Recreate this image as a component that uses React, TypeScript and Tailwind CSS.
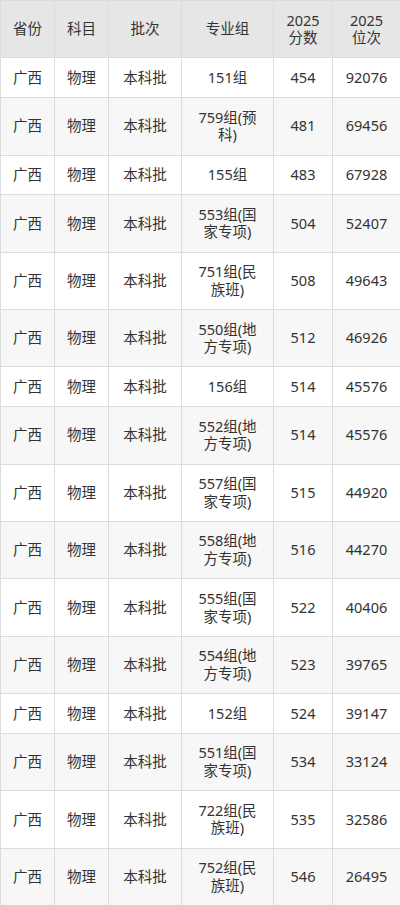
import React from "react";

const ROWS: [string, string, string][] = [
  ["151组", "454", "92076"],
  ["759组(预科)", "481", "69456"],
  ["155组", "483", "67928"],
  ["553组(国家专项)", "504", "52407"],
  ["751组(民族班)", "508", "49643"],
  ["550组(地方专项)", "512", "46926"],
  ["156组", "514", "45576"],
  ["552组(地方专项)", "514", "45576"],
  ["557组(国家专项)", "515", "44920"],
  ["558组(地方专项)", "516", "44270"],
  ["555组(国家专项)", "522", "40406"],
  ["554组(地方专项)", "523", "39765"],
  ["152组", "524", "39147"],
  ["551组(国家专项)", "534", "33124"],
  ["722组(民族班)", "535", "32586"],
  ["752组(民族班)", "546", "26495"],
];

const cell = "border border-[#dcdcdc] px-[10px] py-[10.5px] text-center align-middle";

export default function App() {
  return (
    <div
      className="w-[400px] bg-white text-[#333] text-[14.5px] leading-[17.7px]"
      style={{ fontFamily: '"Noto Sans", "Noto Sans CJK SC", sans-serif' }}
    >
      <table className="w-full table-fixed border-collapse">
        <colgroup>
          <col className="w-[54px]" />
          <col className="w-[54px]" />
          <col className="w-[73px]" />
          <col className="w-[92px]" />
          <col className="w-[59px]" />
          <col className="w-[68px]" />
        </colgroup>
        <thead>
          <tr className="bg-[#e6e6e6]">
            <th className={`${cell} font-normal`}>省份</th>
            <th className={`${cell} font-normal`}>科目</th>
            <th className={`${cell} font-normal`}>批次</th>
            <th className={`${cell} font-normal`}>专业组</th>
            <th className={`${cell} font-normal`}>
              2025
              <br />
              分数
            </th>
            <th className={`${cell} font-normal`}>
              2025
              <br />
              位次
            </th>
          </tr>
        </thead>
        <tbody>
          {ROWS.map(([group, score, rank], i) => (
            <tr key={i} className={i % 2 === 1 ? "bg-[#f7f7f7]" : "bg-white"}>
              <td className={cell}>广西</td>
              <td className={cell}>物理</td>
              <td className={cell}>本科批</td>
              <td className={cell}>{group}</td>
              <td className={cell}>{score}</td>
              <td className={cell}>{rank}</td>
            </tr>
          ))}
        </tbody>
      </table>
    </div>
  );
}
